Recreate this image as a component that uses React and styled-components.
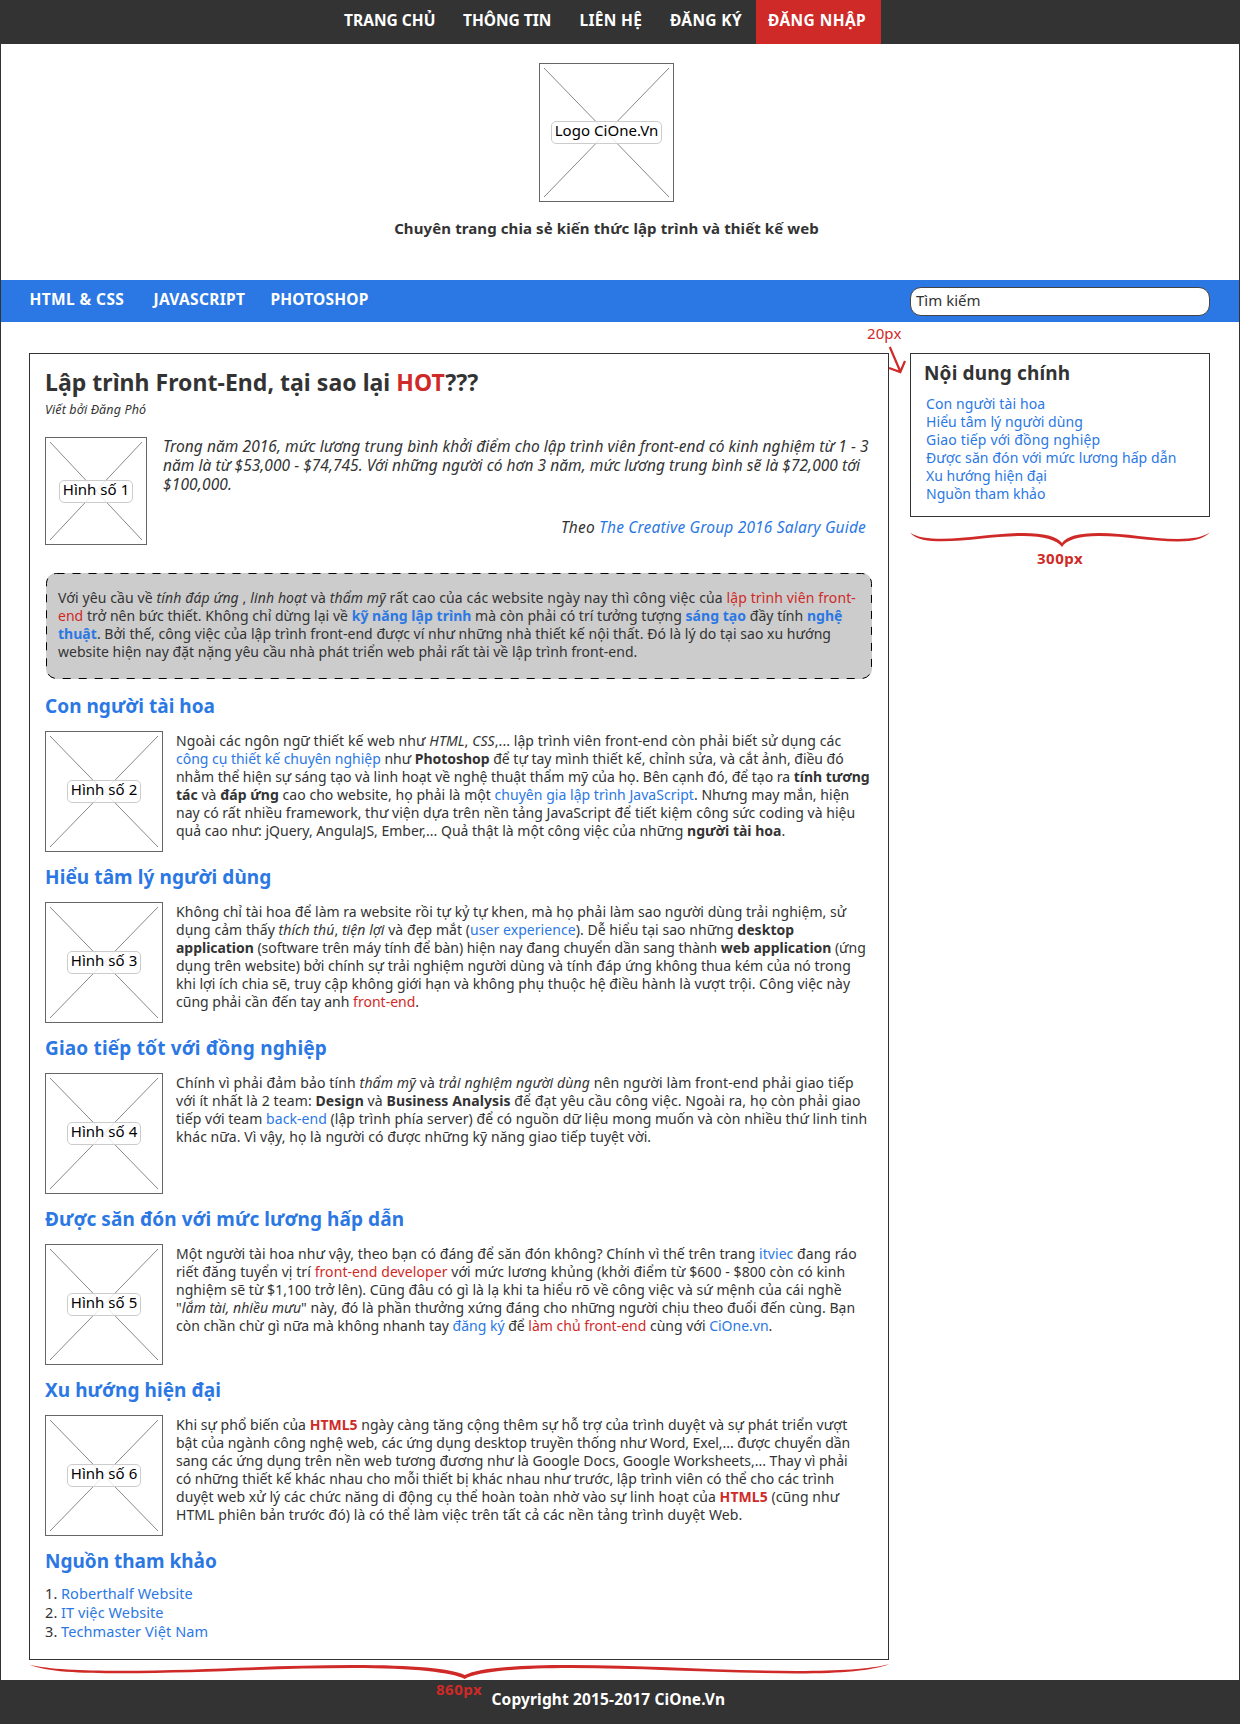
import React from "react";
import styled, { createGlobalStyle } from "styled-components";

const INK = "#333333";
const BLUE = "#2b78e4";
const RED = "#cf2a27";

const GlobalStyle = createGlobalStyle`
  *, *::before, *::after { box-sizing: border-box; }
  body {
    margin: 0;
    background: #fff;
    color: ${INK};
    font-family: "Noto Sans", "Open Sans", sans-serif;
    font-size: 14px;
    line-height: 18px;
  }
  h1, h2, p, ul, ol, figure { margin: 0; padding: 0; font-weight: inherit; }
  ul, ol { list-style: none; }
`;

const Page = styled.div`
  position: relative;
  width: 1240px;
  height: 1724px;
  overflow: hidden;
  display: flex;
  flex-direction: column;
`;

const TopNav = styled.nav`
  display: flex;
  flex: none;
  height: 44px;
  padding-left: 344px;
  background: ${INK};
`;

const TopItem = styled.a`
  width: ${(p) => p.$width}px;
  height: 44px;
  padding-left: ${(p) => (p.$active ? 12 : 0)}px;
  background: ${(p) => (p.$active ? RED : "transparent")};
  color: #fff;
  font-size: 15.5px;
  font-weight: 700;
  line-height: 40px;
  letter-spacing: ${(p) => p.$ls}px;
  white-space: nowrap;
`;

const Body = styled.div`
  flex: none;
  height: 1636px;
  border: solid ${INK};
  border-width: 0 1px;
`;

const Header = styled.header`
  display: flex;
  flex-direction: column;
  align-items: center;
  height: 236px;
  padding: 19px 27px 0 0;
`;

const Tagline = styled.p`
  margin: 15px 0 0 0;
  font-size: 15px;
  font-weight: 700;
  line-height: 22px;
  letter-spacing: 0.1px;
  white-space: nowrap;
`;

const Frame = styled.figure`
  display: grid;
  flex: none;
  place-items: center;
  width: ${(p) => p.$w}px;
  height: ${(p) => p.$h}px;
  border: 1px solid #666;

  > * { grid-area: 1 / 1; }
`;

const Cross = styled.svg`
  display: block;
`;

const FrameLabel = styled.figcaption`
  z-index: 1;
  width: ${(p) => p.$w}px;
  height: 23px;
  border: 1px solid #ccc;
  border-radius: 5px;
  background: rgba(255, 255, 255, 0.8);
  color: #000;
  font-size: 15px;
  font-style: normal;
  line-height: 17px;
  letter-spacing: 0.04px;
  text-align: center;
  white-space: nowrap;
`;

const CategoryBar = styled.nav`
  display: flex;
  align-items: flex-start;
  height: 42px;
  padding: 0 29px 0 28.5px;
  background: ${BLUE};
`;

const CategoryItem = styled.a`
  width: ${(p) => p.$width}px;
  color: #fff;
  font-size: 15.5px;
  font-weight: 700;
  line-height: 38px;
  letter-spacing: ${(p) => p.$ls}px;
  white-space: nowrap;
`;

const Search = styled.div`
  width: 300px;
  height: 29px;
  margin: 7px 0 0 auto;
  padding-left: 5px;
  border: 1px solid #444;
  border-radius: 11px;
  background: #fff;
  font-size: 15px;
  line-height: 25px;
`;

const Content = styled.main`
  display: flex;
  align-items: flex-start;
  gap: 21px;
  padding: 31px 28px 0;
`;

const Article = styled.article`
  flex: none;
  width: 860px;
  height: 1307px;
  padding: 12px 0 0 15px;
  border: 1px solid ${INK};
`;

const Title = styled.h1`
  font-size: 23px;
  font-weight: 700;
  line-height: 32px;
  letter-spacing: 0.04px;
`;

const Byline = styled.p`
  margin-top: 3px;
  font-size: 12.5px;
  font-style: italic;
  letter-spacing: 0.12px;
`;

const Intro = styled.div`
  display: flex;
  gap: 16px;
  height: 108px;
  margin-top: 18px;
  font-size: 15.5px;
  font-style: italic;
  line-height: 19px;
`;

const Source = styled.p`
  width: 703px;
  margin-top: 24px;
  text-align: right;
  letter-spacing: 0.18px;
`;

const Callout = styled.div`
  position: relative;
  width: 826px;
  height: 106px;
  margin: 28px 0 14px 1px;
  padding: 16px 0 0 12px;
  border-radius: 10px;
  background: #ccc;
`;

const DashedEdge = styled.svg`
  position: absolute;
  inset: 0;
`;

const Line = styled.span`
  display: block;
  letter-spacing: ${(p) => p.$ls}px;
  white-space: nowrap;
`;

const Link = styled.a`
  color: ${BLUE};
`;

const Hot = styled.span`
  color: ${RED};
`;

const Key = styled.strong`
  color: ${BLUE};
`;

const Section = styled.section`
  height: 171px;
`;

const Heading = styled.h2`
  color: ${BLUE};
  font-size: 19px;
  font-weight: 700;
  line-height: 26px;
  letter-spacing: ${(p) => p.$ls}px;
  white-space: nowrap;
`;

const SectionRow = styled.div`
  display: flex;
  gap: 13px;
  margin-top: 12px;
`;

const Paragraph = styled.p`
  padding-top: 1px;
`;

const References = styled.ol`
  margin-top: 10px;
  font-size: 14.5px;
  line-height: 19px;
  letter-spacing: 0.1px;
`;

const Reference = styled.li`
  display: flex;
`;

const Index = styled.span`
  width: 16px;
`;

const Sidebar = styled.aside`
  width: 300px;
  height: 164px;
  padding: 6px 0 0 13px;
  border: 1px solid ${INK};
`;

const SidebarTitle = styled.h2`
  font-size: 19px;
  font-weight: 700;
  line-height: 26px;
  letter-spacing: 0.16px;
`;

const Toc = styled.ul`
  margin: 9px 0 0 2px;
  color: ${BLUE};
`;

const Footer = styled.footer`
  flex: none;
  height: 44px;
  padding-left: 491.5px;
  background: ${INK};
  color: #fff;
  font-size: 15.5px;
  font-weight: 700;
  line-height: 38px;
  letter-spacing: 0.14px;
`;

const Note = styled.span`
  position: absolute;
  left: ${(p) => p.$x}px;
  top: ${(p) => p.$y}px;
  color: ${RED};
  font-size: 15px;
  font-weight: ${(p) => (p.$bold ? 700 : 400)};
  line-height: 20px;
  letter-spacing: ${(p) => (p.$bold ? 0.5 : 0.1)}px;
`;

const Mark = styled.svg`
  position: absolute;
  left: ${(p) => p.$x}px;
  top: ${(p) => p.$y}px;
  overflow: visible;
`;

function Placeholder({ w, h, labelWidth, children }) {
  const iw = w - 2;
  const ih = h - 2;
  return (
    <Frame $w={w} $h={h}>
      <Cross width={iw} height={ih} stroke="#888" strokeWidth="1">
        <line x1="4" y1="4" x2={iw - 4} y2={ih - 4} />
        <line x1={iw - 4} y1="4" x2="4" y2={ih - 4} />
      </Cross>
      <FrameLabel $w={labelWidth}>{children}</FrameLabel>
    </Frame>
  );
}

function Brace({ x, y, width }) {
  return (
    <Mark $x={x} $y={y} width={width} height="16" viewBox="0 0 300 16" preserveAspectRatio="none" fill={RED}>
      <path d="M0 0.5 C6 8 18 9.2 32 9.2 C60 9.2 85 4 113 4 C134 4 148 8.5 152 15 C155.5 8.5 168 4 189 4 C216 4 240 9.4 268 9.4 C284 9.4 294 6.5 300 0.2 C293 5 283 6.9 268 6.9 C240 6.9 216 1 189 1 C168 1 156.5 4.5 152 11 C147.5 4.5 134 1 113 1 C85 1 60 6.7 32 6.7 C18 6.7 7 5.5 0 0.5 Z" />
    </Mark>
  );
}

const topItems = [
  { text: "TRANG CHỦ", width: 119, ls: 0.03 },
  { text: "THÔNG TIN", width: 116.5, ls: -0.01 },
  { text: "LIÊN HỆ", width: 90.5, ls: 0.32 },
  { text: "ĐĂNG KÝ", width: 86, ls: 0.33 },
  { text: "ĐĂNG NHẬP", width: 125, ls: 0.41, active: true },
];

const tocItems = [
  ["Con người tài hoa", 0.11],
  ["Hiểu tâm lý người dùng", 0.07],
  ["Giao tiếp với đồng nghiệp", 0.19],
  ["Được săn đón với mức lương hấp dẫn", 0.095],
  ["Xu hướng hiện đại", 0.02],
  ["Nguồn tham khảo", 0.0],
];

const references = ["Roberthalf Website", "IT việc Website", "Techmaster Việt Nam"];

const sections = [
  {
    title: "Con người tài hoa",
    ls: 0.03,
    lines: [
      [0.075, <>Ngoài các ngôn ngữ thiết kế web như <em>HTML</em>, <em>CSS</em>,... lập trình viên front-end còn phải biết sử dụng các</>],
      [-0.021, <><Link>công cụ thiết kế chuyên nghiệp</Link> như <strong>Photoshop</strong> để tự tay mình thiết kế, chỉnh sửa, và cắt ảnh, điều đó</>],
      [-0.029, <>nhằm thể hiện sự sáng tạo và linh hoạt về nghệ thuật thẩm mỹ của họ. Bên cạnh đó, để tạo ra <strong>tính tương</strong></>],
      [0.036, <><strong>tác</strong> và <strong>đáp ứng</strong> cao cho website, họ phải là một <Link>chuyên gia lập trình JavaScript</Link>. Nhưng may mắn, hiện</>],
      [0.03, <>nay có rất nhiều framework, thư viện dựa trên nền tảng JavaScript để tiết kiệm công sức coding và hiệu</>],
      [-0.006, <>quả cao như: jQuery, AngulaJS, Ember,... Quả thật là một công việc của những <strong>người tài hoa</strong>.</>],
    ],
  },
  {
    title: "Hiểu tâm lý người dùng",
    ls: 0.09,
    lines: [
      [0.035, <>Không chỉ tài hoa để làm ra website rồi tự kỷ tự khen, mà họ phải làm sao người dùng trải nghiệm, sử</>],
      [0.054, <>dụng cảm thấy <em>thích thú</em>, <em>tiện lợi</em> và đẹp mắt (<Link>user experience</Link>). Dễ hiểu tại sao những <strong>desktop</strong></>],
      [-0.032, <><strong>application</strong> (software trên máy tính để bàn) hiện nay đang chuyển dần sang thành <strong>web application</strong> (ứng</>],
      [-0.002, <>dụng trên website) bởi chính sự trải nghiệm người dùng và tính đáp ứng không thua kém của nó trong</>],
      [0.013, <>khi lợi ích chia sẽ, truy cập không giới hạn và không phụ thuộc hệ điều hành là vượt trội. Công việc này</>],
      [0.01, <>cũng phải cần đến tay anh <Hot>front-end</Hot>.</>],
    ],
  },
  {
    title: "Giao tiếp tốt với đồng nghiệp",
    ls: 0.18,
    lines: [
      [0.126, <>Chính vì phải đảm bảo tính <em>thẩm mỹ</em> và <em>trải nghiệm người dùng</em> nên người làm front-end phải giao tiếp</>],
      [0.1, <>với ít nhất là 2 team: <strong>Design</strong> và <strong>Business Analysis</strong> để đạt yêu cầu công việc. Ngoài ra, họ còn phải giao</>],
      [0.052, <>tiếp với team <Link>back-end</Link> (lập trình phía server) để có nguồn dữ liệu mong muốn và còn nhiều thứ linh tinh</>],
      [0.052, <>khác nữa. Vì vậy, họ là người có được những kỹ năng giao tiếp tuyệt vời.</>],
    ],
  },
  {
    title: "Được săn đón với mức lương hấp dẫn",
    ls: 0.08,
    lines: [
      [0.048, <>Một người tài hoa như vậy, theo bạn có đáng để săn đón không? Chính vì thế trên trang <Link>itviec</Link> đang ráo</>],
      [0.077, <>riết đăng tuyển vị trí <Hot>front-end developer</Hot> với mức lương khủng (khởi điểm từ $600 - $800 còn có kinh</>],
      [0.044, <>nghiệm sẽ từ $1,100 trở lên). Cũng đâu có gì là lạ khi ta hiểu rõ về công việc và sứ mệnh của cái nghề</>],
      [0.039, <>"<em>lắm tài, nhiều mưu</em>" này, đó là phần thưởng xứng đáng cho những người chịu theo đuổi đến cùng. Bạn</>],
      [-0.005, <>còn chần chừ gì nữa mà không nhanh tay <Link>đăng ký</Link> để <Hot>làm chủ front-end</Hot> cùng với <Link>CiOne.vn</Link>.</>],
    ],
  },
  {
    title: "Xu hướng hiện đại",
    ls: 0.06,
    lines: [
      [0.032, <>Khi sự phổ biến của <Hot as="strong">HTML5</Hot> ngày càng tăng cộng thêm sự hỗ trợ của trình duyệt và sự phát triển vượt</>],
      [-0.039, <>bật của ngành công nghệ web, các ứng dụng desktop truyền thống như Word, Exel,... được chuyển dần</>],
      [-0.005, <>sang các ứng dụng trên nền web tương đương như là Google Docs, Google Worksheets,... Thay vì phải</>],
      [-0.025, <>có những thiết kế khác nhau cho mỗi thiết bị khác nhau như trước, lập trình viên có thể cho các trình</>],
      [0.061, <>duyệt web xử lý các chức năng di động cụ thể hoàn toàn nhờ vào sự linh hoạt của <Hot as="strong">HTML5</Hot> (cũng như</>],
      [0.077, <>HTML phiên bản trước đó) là có thể làm việc trên tất cả các nền tảng trình duyệt Web.</>],
    ],
  },
];

export default function App() {
  return (
    <Page>
      <GlobalStyle />
      <TopNav>
        {topItems.map((item) => (
          <TopItem key={item.text} $width={item.width} $ls={item.ls} $active={item.active}>
            {item.text}
          </TopItem>
        ))}
      </TopNav>
      <Body>
        <Header>
          <Placeholder w={135} h={139} labelWidth={111}>Logo CiOne.Vn</Placeholder>
          <Tagline>Chuyên trang chia sẻ kiến thức lập trình và thiết kế web</Tagline>
        </Header>
        <CategoryBar>
          <CategoryItem $width={124} $ls={0.4}>HTML &amp; CSS</CategoryItem>
          <CategoryItem $width={117} $ls={0.3}>JAVASCRIPT</CategoryItem>
          <CategoryItem $width={100} $ls={0.17}>PHOTOSHOP</CategoryItem>
          <Search>Tìm kiếm</Search>
        </CategoryBar>
        <Content>
          <Article>
            <Title>Lập trình Front-End, tại sao lại <Hot>HOT</Hot>???</Title>
            <Byline>Viết bởi Đăng Phó</Byline>
            <Intro>
              <Placeholder w={102} h={108} labelWidth={74}>Hình số 1</Placeholder>
              <div>
                <p>
                  <Line $ls={0.062}>Trong năm 2016, mức lương trung bình khởi điểm cho lập trình viên front-end có kinh nghiệm từ 1 - 3</Line>
                  <Line $ls={0.046}>năm là từ $53,000 - $74,745. Với những người có hơn 3 năm, mức lương trung bình sẽ là $72,000 tới</Line>
                  <Line $ls={0.16}>$100,000.</Line>
                </p>
                <Source>Theo <Link>The Creative Group 2016 Salary Guide</Link></Source>
              </div>
            </Intro>
            <Callout>
              <DashedEdge width="826" height="106" fill="none" stroke="#000" strokeDasharray="8 8">
                <rect x="0.5" y="0.5" width="825" height="105" rx="10" />
              </DashedEdge>
              <Line $ls={0.115}>Với yêu cầu về <em>tính đáp ứng</em> , <em>linh hoạt</em> và <em>thẩm mỹ</em> rất cao của các website ngày nay thì công việc của <Hot>lập trình viên front-</Hot></Line>
              <Line $ls={0.034}><Hot>end</Hot> trở nên bức thiết. Không chỉ dừng lại về <Key>kỹ năng lập trình</Key> mà còn phải có trí tưởng tượng <Key>sáng tạo</Key> đầy tính <Key>nghệ</Key></Line>
              <Line $ls={0.029}><Key>thuật</Key>. Bởi thế, công việc của lập trình front-end được ví như những nhà thiết kế nội thất. Đó là lý do tại sao xu hướng</Line>
              <Line $ls={0.02}>website hiện nay đặt nặng yêu cầu nhà phát triển web phải rất tài về lập trình front-end.</Line>
            </Callout>
            {sections.map((section, i) => (
              <Section key={section.title}>
                <Heading $ls={section.ls}>{section.title}</Heading>
                <SectionRow>
                  <Placeholder w={118} h={121} labelWidth={74}>{`Hình số ${i + 2}`}</Placeholder>
                  <Paragraph>
                    {section.lines.map(([ls, text], n) => (
                      <Line key={n} $ls={ls}>{text}</Line>
                    ))}
                  </Paragraph>
                </SectionRow>
              </Section>
            ))}
            <Heading $ls={0}>Nguồn tham khảo</Heading>
            <References>
              {references.map((name, i) => (
                <Reference key={name}>
                  <Index>{i + 1}.</Index>
                  <Link>{name}</Link>
                </Reference>
              ))}
            </References>
          </Article>
          <Sidebar>
            <SidebarTitle>Nội dung chính</SidebarTitle>
            <Toc>
              {tocItems.map(([text, ls]) => (
                <li key={text}><Line $ls={ls}>{text}</Line></li>
              ))}
            </Toc>
          </Sidebar>
        </Content>
      </Body>
      <Footer>Copyright 2015-2017 CiOne.Vn</Footer>

      <Note $x={867} $y={323}>20px</Note>
      <Mark $x={888} $y={346} width="20" height="28" fill="none" stroke={RED} strokeWidth="2.2">
        <path d="M1.8 1 L12.3 25.5 M1 22 L12.3 26 L17 15" />
      </Mark>
      <Brace x={910} y={532} width={300} />
      <Note $x={1037} $y={548} $bold>300px</Note>
      <Brace x={29} y={1664} width={860} />
      <Note $x={436} $y={1679} $bold>860px</Note>
    </Page>
  );
}
